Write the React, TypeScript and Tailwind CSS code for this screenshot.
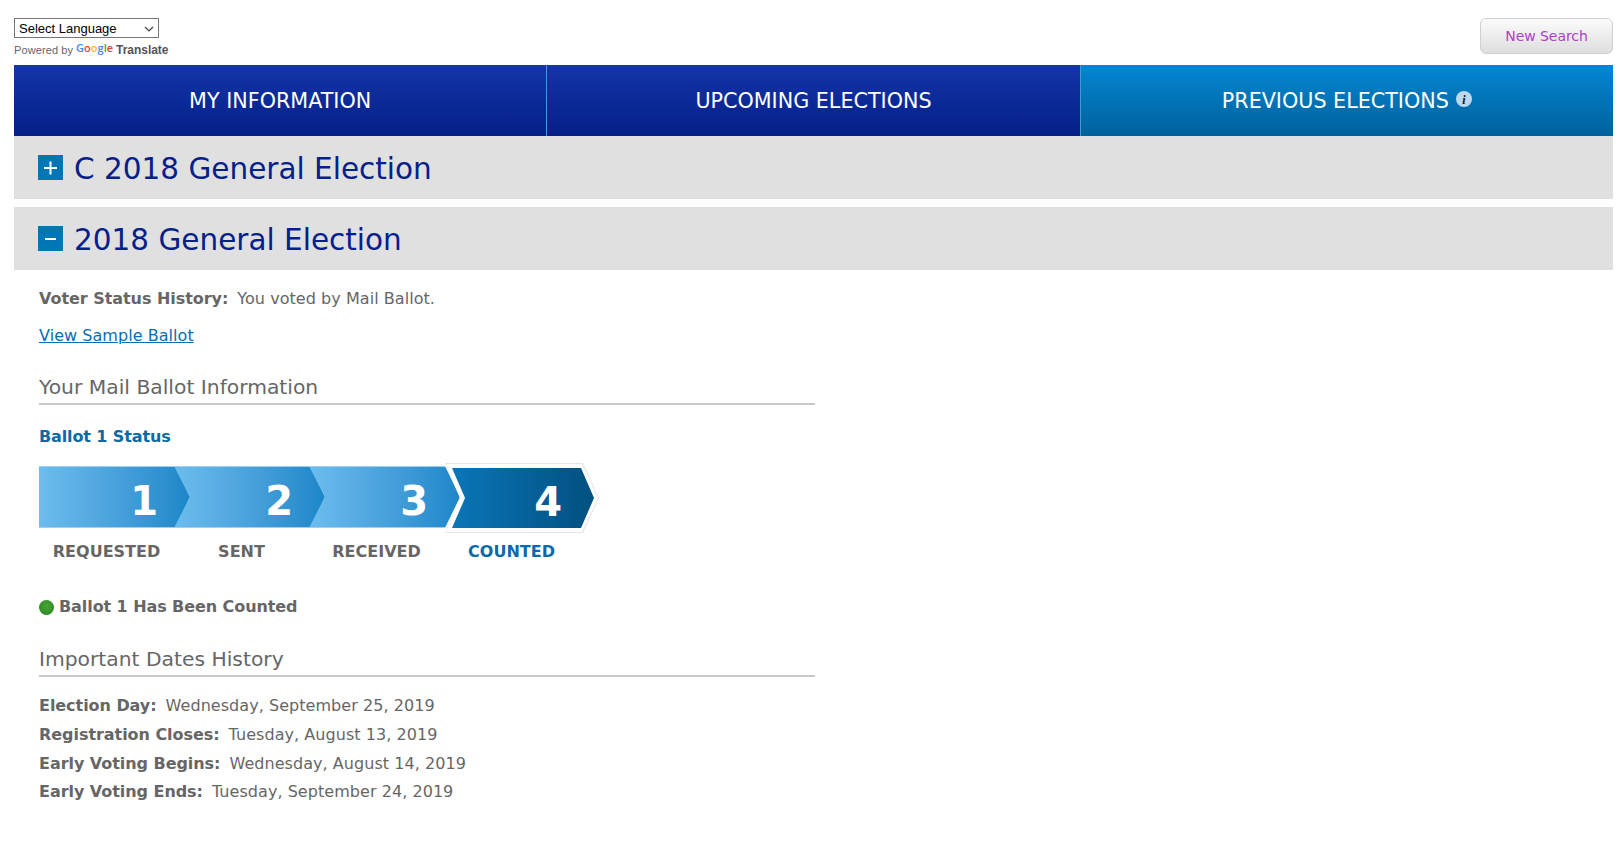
const font = "font-['Verdana','DejaVu_Sans',sans-serif]";

function Tab({ label, active, info }: { label: string; active?: boolean; info?: boolean }) {
  return (
    <div
      className={
        "flex-1 h-[71px] flex items-center justify-center gap-[7px] text-white text-[20.7px] border-r border-[#3f9ccf] last:border-r-0 " +
        (active ? "bg-gradient-to-b from-[#0487d3] to-[#00619b]" : "bg-gradient-to-b from-[#1535a8] to-[#041f87]")
      }
    >
      <span className="pt-[3px]">{label}</span>
      {info && (
        <svg width="16" height="16" viewBox="0 0 16 16" className="mb-[3px]">
          <circle cx="8" cy="8" r="8" fill="#bcd8ee" />
          <text x="8" y="12.5" textAnchor="middle" fontSize="12" fontWeight="700" fontStyle="italic" fontFamily="Liberation Serif, serif" fill="#111">i</text>
        </svg>
      )}
    </div>
  );
}

function Acc({ title, open }: { title: string; open?: boolean }) {
  return (
    <div className="h-[63px] bg-[#e0e0e0] flex items-center pl-[24px] gap-[11px]">
      <svg width="25" height="25" viewBox="0 0 25 25" className="shrink-0">
        <rect width="25" height="25" fill="#0077b5" />
        {open ? (
          <rect x="7" y="12" width="11" height="2" fill="#fff" />
        ) : (
          <path d="M6 13h13M12.5 6.500v13" stroke="#fff" strokeWidth="2" />
        )}
      </svg>
      <span className="pt-[4px] text-[29.5px] leading-none text-[#05208a]">{title}</span>
    </div>
  );
}

function Heading({ children, tall }: { children: string; tall?: boolean }) {
  return (
    <div className={"w-[776px] h-[30px] border-b-2 border-[#c8c8c8] text-[20.3px] leading-[24px] text-[#666]"}>
      {children}
    </div>
  );
}

function Step({ n, i, active }: { n: number; i: number; active?: boolean }) {
  if (active) {
    return (
      <div className="relative w-[135px] h-[62px]">
        <div className="absolute left-[1px] top-[-3px] w-[154px] h-[70px] bg-[#e4e6e8] [clip-path:polygon(0_0,138px_0,100%_50%,138px_100%,0_100%,15px_50%)]" />
        <div className="absolute left-[2px] top-[-2px] w-[152px] h-[68px] bg-white [clip-path:polygon(0_0,136px_0,100%_50%,136px_100%,0_100%,14px_50%)]" />
        <div className="absolute left-[8px] top-[2px] w-[142px] h-[60px] flex items-center justify-end pr-[32px] pt-[8px] text-white text-[40px] font-bold bg-gradient-to-r from-[#0b76b8] to-[#02507f] [clip-path:polygon(0_0,129px_0,100%_50%,129px_100%,0_100%,13px_50%)]">
          {n}
        </div>
      </div>
    );
  }
  const shape =
    i === 0
      ? "[clip-path:polygon(0_0,136px_0,100%_50%,136px_100%,0_100%)]"
      : "[clip-path:polygon(0_0,136px_0,100%_50%,136px_100%,0_100%,16px_50%)]";
  return (
    <div className="relative w-[135px] h-[62px]">
      <div
        className={
          "absolute inset-y-0 left-0 w-[151px] flex items-center justify-end pr-[32px] pt-[8px] border-y border-[#9fd0f0] text-white text-[40px] font-bold bg-gradient-to-r from-[#6dbdee] to-[#1b87c8] " +
          shape
        }
      >
        {n}
      </div>
    </div>
  );
}

function DateRow({ k, v, h }: { k: string; v: string; h: string }) {
  return (
    <div className={"flex gap-[9px] text-[16px] text-[#666] " + h}>
      <b className="tracking-[-0.05px]">{k}</b>
      <span className="tracking-[0.05px]">{v}</span>
    </div>
  );
}

export default function App() {
  return (
    <div className={"min-h-[857px] bg-white pl-[14px] pr-[9px] " + font}>
      <div className="h-[65px] pt-[18px] flex justify-between">
        <div>
          <div className="w-[145px] h-[20px] border border-[#767676] flex items-center justify-between pl-[4px] pr-[4px] pt-[1px] text-[13px] leading-none text-black font-['Liberation_Sans',sans-serif]">
            <span>Select Language</span>
            <svg width="10" height="6" viewBox="0 0 10 6">
              <path d="M1 1l4 4 4-4" fill="none" stroke="#444" strokeWidth="1.200" />
            </svg>
          </div>
          <div className="mt-[3px] flex items-center h-[18px] text-[11px] text-[#666] font-['Liberation_Sans',sans-serif] tracking-[0.1px] whitespace-nowrap">
            <span>Powered by</span>
            <span className="ml-[3px] mb-[3px] font-semibold text-[#4285f4] tracking-[0px] font-['Open_Sans',sans-serif]">
              G<span className="text-[#ea4335]">o</span><span className="text-[#fbbc05]">o</span>g<span className="text-[#34a853]">l</span><span className="text-[#ea4335]">e</span>
            </span>
            <span className="ml-[3px] font-bold text-[12px] text-[#555] tracking-[-0.03px]">Translate</span>
          </div>
        </div>
        <div className="w-[133px] h-[36px] rounded-[6px] border border-[#d0d0d0] bg-gradient-to-b from-[#fbfbfb] to-[#dedede] flex items-center justify-center text-[14px] tracking-[-0.05px] text-[#b040c8]">
          New Search
        </div>
      </div>

      <div className="flex">
        <Tab label="MY INFORMATION" />
        <Tab label="UPCOMING ELECTIONS" />
        <Tab label="PREVIOUS ELECTIONS" active info />
      </div>

      <Acc title="C 2018 General Election" />
      <div className="h-[8px]" />
      <Acc title="2018 General Election" open />

      <div className="pl-[25px] pt-[18px]">
        <div className="flex gap-[9px] text-[16px] leading-[22px] text-[#666]">
          <b className="tracking-[-0.05px]">Voter Status History:</b>
          <span className="tracking-[0.05px]">You voted by Mail Ballot.</span>
        </div>
        <div className="mt-[15px] text-[16px] leading-[22px] tracking-[0.05px] text-[#0a6eb0] underline">View Sample Ballot</div>
        <div className="mt-[28px]">
          <Heading>Your Mail Ballot Information</Heading>
        </div>
        <div className="mt-[21px] text-[16px] leading-[22px] tracking-[-0.12px] font-bold text-[#0a6aa8]">Ballot 1 Status</div>

        <div className="mt-[18px] flex text-center">
          <Step n={1} i={0} />
          <Step n={2} i={1} />
          <Step n={3} i={2} />
          <Step n={4} i={3} active />
        </div>
        <div className="mt-[13px] flex text-center text-[16px] leading-[22px] font-bold text-[#666]">
          <div className="w-[135px]">REQUESTED</div>
          <div className="w-[135px]">SENT</div>
          <div className="w-[135px]">RECEIVED</div>
          <div className="w-[135px] text-[#0a6aa8]">COUNTED</div>
        </div>

        <div className="mt-[33px] flex items-center gap-[5px] text-[16px] tracking-[-0.08px] leading-[22px] font-bold text-[#666]">
          <span className="w-[15px] h-[15px] rounded-full bg-[radial-gradient(circle_at_50%_40%,#46a838,#2b7d20)]" />
          <span>Ballot 1 Has Been Counted</span>
        </div>

        <div className="mt-[29px]">
          <Heading>Important Dates History</Heading>
        </div>
        <div className="mt-[15px] leading-[28px]">
          <DateRow k="Election Day:" v="Wednesday, September 25, 2019" h="h-[29px]" />
          <DateRow k="Registration Closes:" v="Tuesday, August 13, 2019" h="h-[29px]" />
          <DateRow k="Early Voting Begins:" v="Wednesday, August 14, 2019" h="h-[28px]" />
          <DateRow k="Early Voting Ends:" v="Tuesday, September 24, 2019" h="h-[28px]" />
        </div>
      </div>
    </div>
  );
}
